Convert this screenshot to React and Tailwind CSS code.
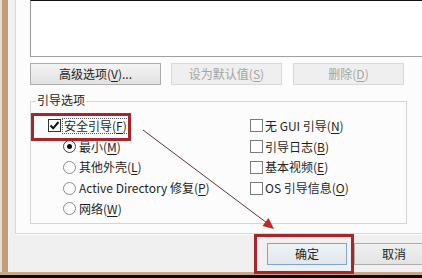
import React from "react";

const U = ({ children }) => <span className="underline underline-offset-[2px]">{children}</span>;

function Check({ checked }) {
  return (
    <span
      className={
        "inline-flex items-center justify-center w-[13px] h-[13px] bg-white border shrink-0 " +
        (checked ? "border-[#333333]" : "border-[#7a7a7a]")
      }
    >
      {checked && (
        <svg width="11" height="11" viewBox="0 0 11 11">
          <path d="M1.5 5.5 L4.2 8.3 L9.5 2" fill="none" stroke="#111" strokeWidth="2" />
        </svg>
      )}
    </span>
  );
}

function Radio({ checked }) {
  return (
    <span
      className={
        "inline-flex items-center justify-center w-[13px] h-[13px] rounded-full bg-white border shrink-0 " +
        (checked ? "border-[#444444]" : "border-[#8a8a8a]")
      }
    >
      {checked && <span className="block w-[5px] h-[5px] rounded-full bg-[#111]" />}
    </span>
  );
}

export default function App() {
  return (
    <div className="relative w-[422px] h-[278px] overflow-hidden bg-[#f0f0f0] flex flex-col font-['Noto_Sans_CJK_SC','Noto_Sans',sans-serif] text-[12px] leading-none text-[#1f1f1f]">
      <div className="flex flex-1 min-h-0">
        <div className="w-[2px] shrink-0 bg-[#e6dcd2]" />
        <div className="w-[6px] shrink-0 bg-[#c39d7b]" />
        <div className="flex-1 min-w-0 overflow-hidden flex flex-col bg-[#f0f0f0] pl-[6px] border-l border-[#faf6f2]">
          {/* tab panel */}
          <div className="h-[234px] shrink-0 bg-[#fcfcfc] border-l border-b border-[#d6d6d6] pl-[14px] flex flex-col">
            {/* list box */}
            <div className="h-[57px] shrink-0 bg-white border-t border-t-[#111] border-l border-b border-l-[#9a9a9a] border-b-[#a0a0a0]" />
            {/* buttons row */}
            <div className="flex mt-[6px] h-[22px] shrink-0">
              <div className="w-[131px] h-[22px] shrink-0 flex items-center justify-center border border-[#adadad] bg-gradient-to-b from-[#f4f4f4] to-[#e2e2e2] text-[#222]">
                高级选项(<U>V</U>)...
              </div>
              <div className="ml-[10px] w-[111px] h-[22px] shrink-0 flex items-center justify-center border border-[#d9d9d9] bg-[#efefef] text-[#a3a3a3]">
                设为默认值(<U>S</U>)
              </div>
              <div className="ml-[11px] w-[111px] h-[22px] shrink-0 flex items-center justify-center border border-[#d9d9d9] bg-[#efefef] text-[#a3a3a3]">
                删除(<U>D</U>)
              </div>
            </div>
            {/* group box */}
            <div className="relative shrink-0 mt-[16px] w-[377px] h-[123px] border border-[#d5d5d5] pt-[13.5px] pl-[17px] flex">
              <span className="absolute left-[5px] -top-[8px] px-[1px] bg-[#fcfcfc] text-[#222]">引导选项</span>
              <div className="w-[202px] shrink-0 flex flex-col">
                <div className="h-[20.75px] flex items-center">
                  <Check checked />
                  <span className="ml-[1px] px-[1px] py-[1px] border border-dotted border-[#555]">
                    安全引导(<U>F</U>)
                  </span>
                </div>
                {[
                  [true, "最小", "M"],
                  [false, "其他外壳", "L"],
                  [false, "Active Directory 修复", "P"],
                  [false, "网络", "W"],
                ].map(([c, t, k]) => (
                  <div key={k} className="h-[20.75px] flex items-center pl-[15px]">
                    <Radio checked={c} />
                    <span className="ml-[3px] whitespace-nowrap">
                      {t}(<U>{k}</U>)
                    </span>
                  </div>
                ))}
              </div>
              <div className="flex flex-col">
                {[
                  ["无 GUI 引导", "N"],
                  ["引导日志", "B"],
                  ["基本视频", "E"],
                  ["OS 引导信息", "O"],
                ].map(([t, k]) => (
                  <div key={k} className="h-[20.75px] flex items-center">
                    <Check />
                    <span className="ml-[2px] whitespace-nowrap">
                      {t}(<U>{k}</U>)
                    </span>
                  </div>
                ))}
              </div>
            </div>
          </div>
          {/* bottom buttons */}
          <div className="flex-1 flex pt-[8px] pl-[252px] gap-[7px] border-t border-[#ffffff]">
            <div className="w-[80px] h-[22px] shrink-0 flex items-center justify-center border border-[#7aa7d0] bg-gradient-to-b from-[#eef3f7] to-[#e3e7ea] text-[#222]">
              确定
            </div>
            <div className="w-[80px] h-[22px] shrink-0 flex items-center justify-center border border-[#adadad] bg-gradient-to-b from-[#f0f0f0] to-[#e3e3e3] text-[#222]">
              取消
            </div>
          </div>
        </div>
      </div>
      <div className="h-[3px] shrink-0 bg-[#c9a887]" />
      <div className="h-[3px] shrink-0 bg-[#0c0c0c]" />

      {/* annotation overlays */}
      <div className="absolute left-[31px] top-[113px] w-[100px] h-[28px] border-[3px] border-[#a6262d]" />
      <div className="absolute left-[254px] top-[234px] w-[100px] h-[40px] border-[3px] border-[#a6262d]" />
      <svg className="absolute left-0 top-0 pointer-events-none" width="422" height="278" viewBox="0 0 422 278">
        <line x1="143" y1="130" x2="267" y2="223" stroke="#5a3535" strokeWidth="1" />
        <polygon points="274,229 262.5,226 268.5,218" fill="#c0262c" />
      </svg>
    </div>
  );
}
